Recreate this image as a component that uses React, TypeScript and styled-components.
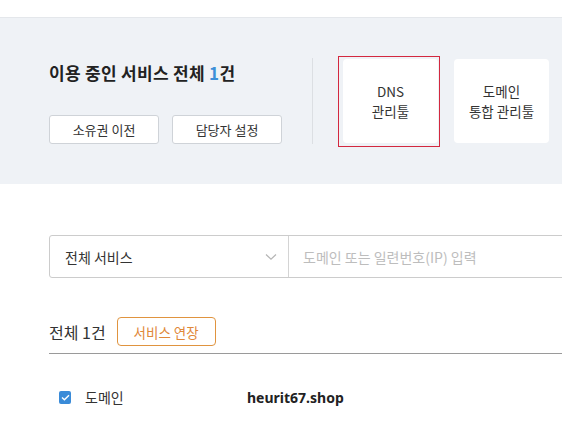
import React from "react";
import styled, { createGlobalStyle } from "styled-components";

const GlobalStyle = createGlobalStyle`
  html, body { margin: 0; padding: 0; background: #fff; overflow: hidden; }
  body { font-family: "Noto Sans CJK KR", "Noto Sans", sans-serif; color: #333; }
  * { box-sizing: border-box; }
`;

const Page = styled.div`
  width: 760px;
  padding-top: 17px;
`;

const Band = styled.section`
  height: 167px;
  background: #eff2f6;
  border-top: 1px solid #e4e7eb;
  padding-left: 49px;
  display: flex;
  align-items: flex-start;
`;

const Summary = styled.div`
  margin-top: 42px;
  display: flex;
  flex-direction: column;
  gap: 30px;
`;

const Title = styled.h2`
  margin: 0;
  font-size: 17px;
  line-height: 25px;
  font-weight: 700;
  color: #222;
  letter-spacing: 0.3px;
`;

const Count = styled.span`
  color: #3d8fd8;
`;

const ButtonRow = styled.div`
  display: flex;
  gap: 13px;
`;

const GhostButton = styled.button`
  width: 110px;
  height: 29px;
  background: #fff;
  border: 1px solid #cfd3d8;
  border-radius: 3px;
  font-family: inherit;
  font-size: 13px;
  color: #333;
  padding: 0;
  line-height: 27px;
`;

const Divider = styled.div`
  width: 1px;
  height: 86px;
  background: #dcdfe3;
  margin: 40px 0 0 30px;
`;

const Focus = styled.div`
  margin: 38px 0 0 25px;
  border: 1px solid #d3283f;
  padding: 2px 1px 3px 4px;
`;

const ToolCard = styled.a<{ $gap?: number }>`
  display: flex;
  flex-direction: column;
  align-items: center;
  justify-content: center;
  width: 95px;
  height: 84px;
  background: #fff;
  border-radius: 4px;
  font-size: 13.5px;
  line-height: 20px;
  color: #333;
  text-align: center;
  text-decoration: none;
  margin-top: ${(p) => p.$gap ?? 0}px;
  margin-left: ${(p) => (p.$gap ? 14 : 0)}px;
`;

const Main = styled.div`
  padding: 51px 0 0 49px;
`;

const Search = styled.div`
  display: flex;
  height: 43px;
  border: 1px solid #cccccc;
  border-radius: 3px;
  width: 700px;
`;

const Select = styled.div`
  width: 239px;
  display: flex;
  align-items: center;
  justify-content: space-between;
  padding: 0 11px 0 15px;
  border-right: 1px solid #d4d4d4;
  font-size: 14px;
  color: #333;
`;

const Placeholder = styled.div`
  display: flex;
  align-items: center;
  padding-left: 14px;
  font-size: 14px;
  color: #bdbdbd;
`;

const ListHeader = styled.div`
  margin-top: 39px;
  display: flex;
  align-items: center;
  gap: 11px;
  padding-bottom: 7px;
  border-bottom: 1px solid #9a9a9a;
  width: 700px;
`;

const Total = styled.span`
  font-size: 16px;
  line-height: 22px;
  color: #333;
`;

const OrangeButton = styled.button`
  width: 99px;
  height: 29px;
  background: #fff;
  border: 1px solid #e0943f;
  border-radius: 4px;
  font-family: inherit;
  font-size: 13.5px;
  color: #e0883a;
  padding: 0;
`;

const Row = styled.div`
  display: flex;
  align-items: center;
  height: 20px;
  margin-top: 33px;
  padding-left: 10px;
`;

const Check = styled.span`
  width: 12px;
  height: 13px;
  border-radius: 2px;
  background: #3a8bd8;
  display: inline-flex;
  align-items: center;
  justify-content: center;
`;

const Kind = styled.span`
  margin-left: 14px;
  width: 162px;
  font-size: 14px;
  color: #333;
`;

const Domain = styled.span`
  font-size: 14px;
  font-weight: 700;
  color: #222;
  font-family: "Noto Sans", sans-serif;
`;

export default function App() {
  return (
    <Page>
      <GlobalStyle />
      <Band>
        <Summary>
          <Title>
            이용 중인 서비스 전체 <Count>1</Count>건
          </Title>
          <ButtonRow>
            <GhostButton>소유권 이전</GhostButton>
            <GhostButton>담당자 설정</GhostButton>
          </ButtonRow>
        </Summary>
        <Divider />
        <Focus>
          <ToolCard>
            <span>DNS</span>
            <span>관리툴</span>
          </ToolCard>
        </Focus>
        <ToolCard $gap={41}>
          <span>도메인</span>
          <span>통합 관리툴</span>
        </ToolCard>
      </Band>
      <Main>
        <Search>
          <Select>
            <span>전체 서비스</span>
            <svg width="12" height="8" viewBox="0 0 12 8">
              <path d="M1 1.5 6 6.2 11 1.5" fill="none" stroke="#b5b5b5" strokeWidth="1.2" />
            </svg>
          </Select>
          <Placeholder>도메인 또는 일련번호(IP) 입력</Placeholder>
        </Search>
        <ListHeader>
          <Total>전체 1건</Total>
          <OrangeButton>서비스 연장</OrangeButton>
        </ListHeader>
        <Row>
          <Check>
            <svg width="9" height="7" viewBox="0 0 9 7">
              <path d="M1 3.6 3.4 5.8 8 1.2" fill="none" stroke="#fff" strokeWidth="1.4" />
            </svg>
          </Check>
          <Kind>도메인</Kind>
          <Domain>heurit67.shop</Domain>
        </Row>
      </Main>
    </Page>
  );
}
